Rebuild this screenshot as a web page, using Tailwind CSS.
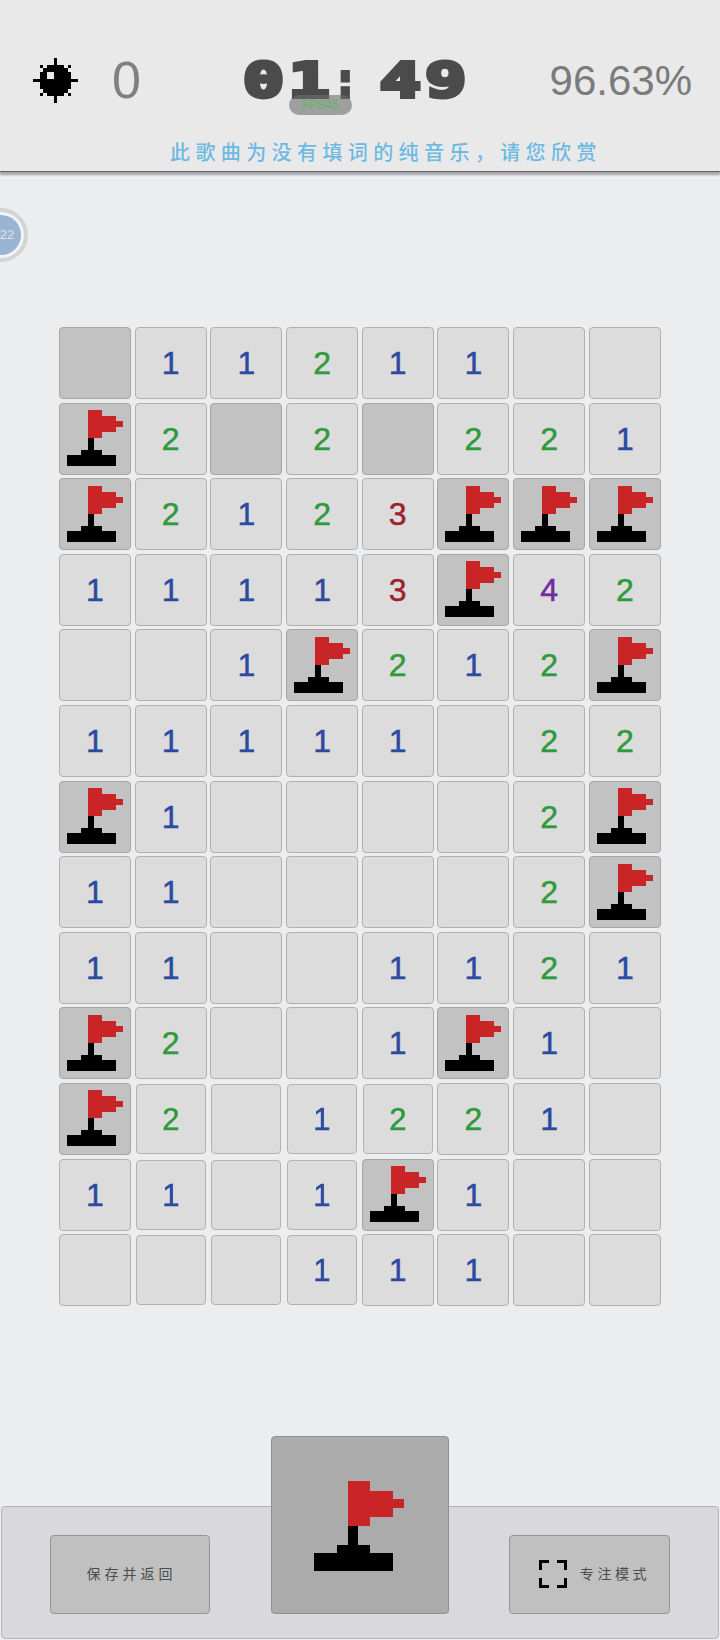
<!DOCTYPE html>
<html lang="en">
<head>
    <meta charset="UTF-8">
    <meta name="viewport" content="width=device-width, initial-scale=1.0">
    <title>Minesweeper</title>
    <script src="https://cdn.jsdelivr.net/npm/@tailwindcss/browser@4"></script>
</head>
<body class="bg-[#ecedef] font-['Liberation_Sans',sans-serif] overflow-hidden">
    <div class="relative w-[720px] h-[1640px] flex flex-col">

        <!-- Top status bar -->
        <header class="relative h-[172px] shrink-0 bg-[#e9e9ea] border-b-[1.5px] border-[#646464] shadow-[0_3px_2px_rgba(0,0,0,0.3)] pt-[50px]">
            <div class="flex items-center h-[60px] pl-[33px] pr-[28px]">
                <svg class="w-[45px] h-[45px] mr-[34px] shrink-0" viewBox="0 0 13 13" shape-rendering="crispEdges">
                    <path fill="#000" d="M6 0h1v2h-1z M2 2h1v1h-1z M4 2h5v1h-5z M10 2h1v1h-1z M3 3h7v1h-7z M2 4h9v2h-9z M0 6h13v1h-13z M2 7h9v2h-9z M3 9h7v1h-7z M2 10h1v1h-1z M4 10h5v1h-5z M10 10h1v1h-1z M6 11h1v2h-1z"/>
                    <path fill="#e9e9e9" d="M4 4h2v2h-2z"/>
                </svg>
                <span class="w-[131px] shrink-0 text-[52px] leading-none text-[#808080]">0</span>
                <span class="inline-block shrink-0 origin-left scale-x-[1.42] whitespace-pre font-['DejaVu_Sans_Mono',monospace] font-bold text-[48px] leading-none tracking-[3.2px] text-[#4b4b4b] [-webkit-text-stroke:4px_#4b4b4b]">01<span class="inline-block origin-left scale-x-[0.55]">:</span>49</span>
                <span class="ml-auto text-[42px] leading-none text-[#7b7b7b] mt-[2px]">96.63%</span>
            </div>
            <p class="mt-[27px] pl-[170px] text-[20px] leading-[30px] tracking-[5.4px] font-medium text-[#6db9e2] font-['Noto_Sans_CJK_SC',sans-serif] whitespace-nowrap">此歌曲为没有填词的纯音乐，请您欣赏</p>
            <!-- FPS pill sits over the timer -->
            <div class="absolute left-[289px] top-[95px] w-[63px] h-[20px] rounded-full bg-[#6e6e6e]/60 flex items-center justify-center text-[12px] leading-none text-[#55bb5e] blur-[0.5px]">FPS45</div>
        </header>

        <!-- Floating progress ball, partly off screen -->
        <div class="absolute left-[-26px] top-[208px] w-[54px] h-[54px] rounded-full border-[4px] border-[#d4d4d5] bg-[#f2f4f7] flex items-center justify-center">
            <div class="w-[40px] h-[40px] rounded-full bg-[#9ab4d3] flex items-center justify-center pl-[12px] text-[13px] text-[#dfe5ee]">22</div>
        </div>

        <!-- Board -->
        <main id="board" class="mt-[155px] ml-[59px] grid grid-cols-[repeat(8,72px)] auto-rows-[72px] gap-x-[3.7px] gap-y-[3.6px]"></main>

        <!-- Bottom toolbar -->
        <footer class="absolute left-[1px] top-[1506px] w-[718px] h-[133px] bg-[#d9d9db] border-[1.5px] border-[#b4b4b5] rounded-[4px] flex items-end pb-[24px]">
            <button class="ml-[48px] w-[160px] h-[79px] pl-[3px] pb-[2px] bg-[#c0c0c1] border-[1.5px] border-[#959596] rounded-[4px] flex items-center justify-center text-[14px] tracking-[4px] text-[#4c4c4c] font-['Noto_Sans_CJK_SC',sans-serif]">保存并返回</button>
            <button class="ml-[61px] w-[178px] h-[178px] shrink-0 bg-[#ababab] border-[1.5px] border-[#8f8f8f] rounded-[4px] flex items-center justify-center">
                <svg class="w-[90px] h-[90px] mt-[2px] -ml-[2px]" viewBox="0 0 90 90" shape-rendering="crispEdges">
                    <path fill="#c92527" d="M34 0h22v10h23v8h11v9h-11v9h-23v9h-22z"/>
                    <path fill="#000" d="M34 45h10v19h12v8h23v18h-79v-18h23v-8h11z"/>
                </svg>
            </button>
            <button class="ml-[60px] w-[161px] h-[79px] pl-[10px] pb-[2px] bg-[#c0c0c1] border-[1.5px] border-[#959596] rounded-[4px] flex items-center justify-center gap-[13px] text-[14px] tracking-[3.6px] text-[#4c4c4c] font-['Noto_Sans_CJK_SC',sans-serif]">
                <svg class="w-[28px] h-[28px]" viewBox="0 0 28 28" fill="none" stroke="#000" stroke-width="3" shape-rendering="crispEdges">
                    <path d="M10 1.500h-8.500v8.500 M18 1.500h8.500v8.500 M1.500 18v8.500h8.500 M26.500 18v8.500h-8.500"/>
                </svg>
                <span>专注模式</span>
            </button>
        </footer>
    </div>

    <script>
        // u = covered, F = flagged, . = open blank
        const rows = [
            'u11211..',
            'F2u2u221',
            'F2123FFF',
            '11113F42',
            '..1F212F',
            '11111.22',
            'F1....2F',
            '11....2F',
            '11..1121',
            'F2..1F1.',
            'F2.1221.',
            '11.1F1..',
            '...111..'
        ];

        // cells caught mid press animation, drawn a little smaller
        const pressed = {
            10: [1, 2, 3, 4],
            11: [1, 2, 3],
            12: [1, 2, 3]
        };

        const digitColors = {
            '1': 'text-[#2c4aa0]',
            '2': 'text-[#2f9a3c]',
            '3': 'text-[#a01f2e]',
            '4': 'text-[#6f2da0]'
        };

        const flag = `
            <svg class="w-[56px] h-[56px] -mt-[1px]" viewBox="0 0 90 90" shape-rendering="crispEdges">
                <path fill="#c92527" d="M34 0h22v10h23v8h11v9h-11v9h-23v9h-22z"/>
                <path fill="#000" d="M34 45h10v19h12v8h23v18h-79v-18h23v-8h11z"/>
            </svg>`;

        const board = document.getElementById('board');
        rows.forEach((row, r) => {
            [...row].forEach((ch, c) => {
                const covered = ch === 'u' || ch === 'F';
                const tone = covered ? 'bg-[#c2c2c3] border-[#a6a6a7]' : 'bg-[#dcdcdd] border-[#b0b0b1]';
                const size = (pressed[r] || []).includes(c) ? 'scale-[0.972]' : '';
                const inner = ch === 'F' ? flag : (covered || ch === '.' ? '' : ch);
                const color = digitColors[ch] || '';
                board.innerHTML += `<div class="flex items-center justify-center rounded-[4px] border-[1.5px] text-[32px] leading-none [-webkit-text-stroke:0.5px_currentColor] ${tone} ${size} ${color}">${inner}</div>`;
            });
        });
    </script>
</body>
</html>
